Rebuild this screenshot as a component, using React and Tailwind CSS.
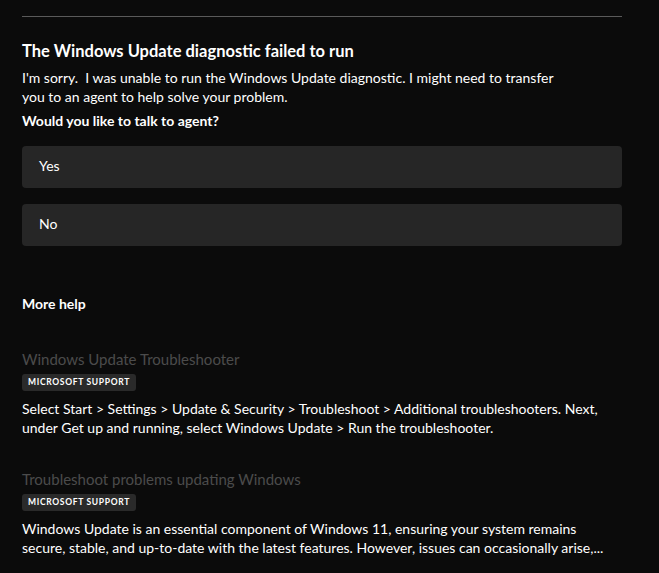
import React from "react";

const font = { fontFamily: 'Lato, "Noto Sans", sans-serif' };

function Badge() {
  return (
    <span className="mt-[5px] self-start flex items-center h-[17px] px-[6px] rounded-[3px] bg-[#2a2a2a] text-[8.5px] leading-none font-bold tracking-[0.08em] text-white uppercase">
      Microsoft Support
    </span>
  );
}

function HelpItem({ title, children }) {
  return (
    <div className="flex flex-col">
      <div className="text-[15px] leading-[20px] text-[#4b4b4b]">{title}</div>
      <Badge />
      <p className="mt-[8px] text-[14px] leading-[19px] text-white">{children}</p>
    </div>
  );
}

function Choice({ label }) {
  return (
    <button className="w-full h-[42px] rounded-[4px] bg-[#262626] text-left px-[17px] pb-[3px] text-[14px] text-white">
      {label}
    </button>
  );
}

export default function App() {
  return (
    <div style={font} className="w-[659px] h-[573px] bg-[#0b0b0b] overflow-hidden">
      <div className="w-[600px] ml-[22px] pt-[16px]">
        <div className="h-px bg-[#5a5a5a]" />
        <h2 className="mt-[23px] text-[16.5px] leading-[22px] font-bold text-white">
          The Windows Update diagnostic failed to run
        </h2>
        <p className="mt-[6px] w-[545px] text-[14px] leading-[19px] text-white">
          I'm sorry.&nbsp; I was unable to run the Windows Update diagnostic. I might need to transfer you to an agent to help solve your problem.
        </p>
        <p className="mt-[5px] text-[14px] leading-[19px] font-bold text-white">
          Would you like to talk to agent?
        </p>
        <div className="mt-[16px] flex flex-col gap-[16px]">
          <Choice label="Yes" />
          <Choice label="No" />
        </div>
        <h3 className="mt-[48px] text-[14px] leading-[19px] font-bold text-white">More help</h3>
        <div className="mt-[36px] flex flex-col gap-[32px]">
          <HelpItem title="Windows Update Troubleshooter">
            Select Start &gt; Settings &gt; Update &amp; Security &gt; Troubleshoot &gt; Additional troubleshooters. Next, under Get up and running, select Windows Update &gt; Run the troubleshooter.
          </HelpItem>
          <HelpItem title="Troubleshoot problems updating Windows">
            Windows Update is an essential component of Windows 11, ensuring your system remains secure, stable, and up-to-date with the latest features. However, issues can occasionally arise,...
          </HelpItem>
        </div>
      </div>
    </div>
  );
}
